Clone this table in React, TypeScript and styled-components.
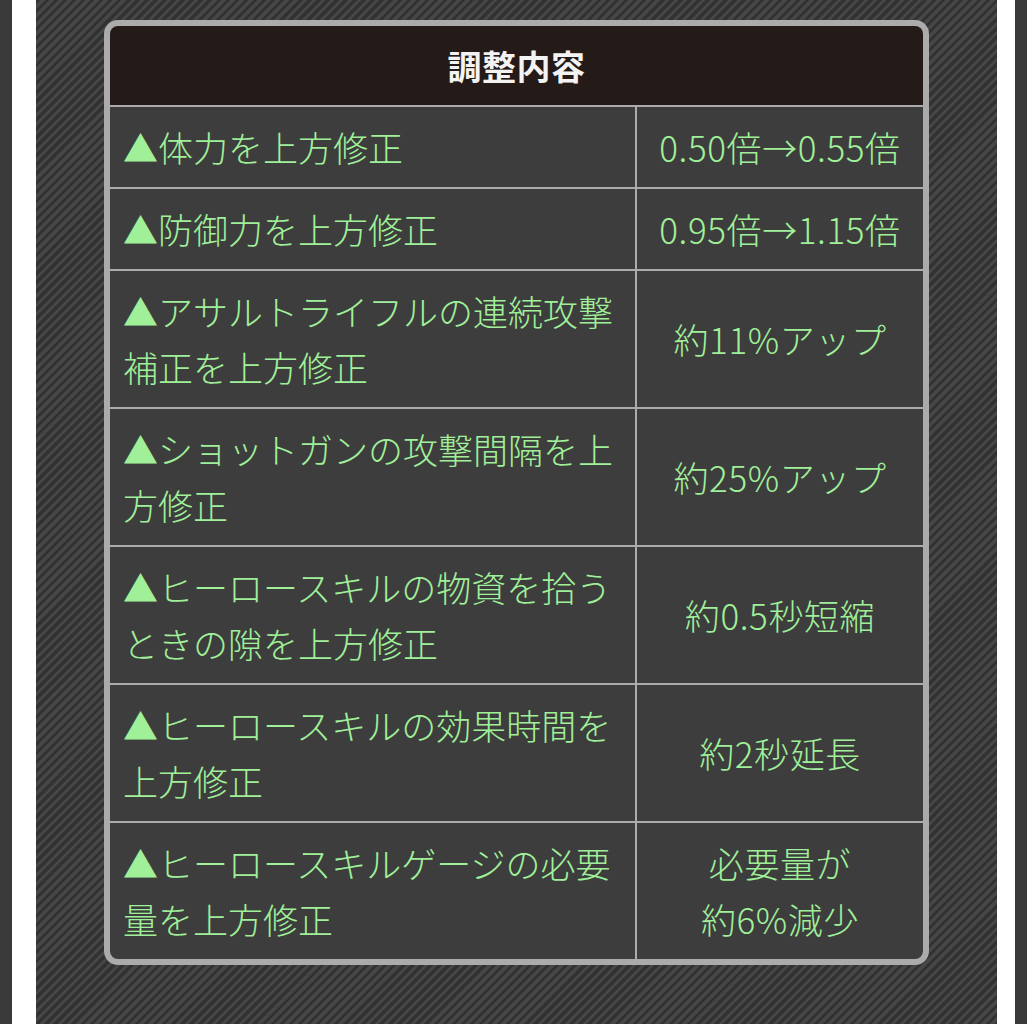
import React from "react";
import styled, { createGlobalStyle } from "styled-components";

const GlobalStyle = createGlobalStyle`
  html, body {
    margin: 0;
    padding: 0;
    background: #3a3a3a;
  }
  body {
    font-family: "Noto Sans CJK JP", "Noto Sans", sans-serif;
  }
`;

const Page = styled.div`
  display: flex;
  min-height: 100vh;
  padding: 0 12px;
  background: #3a3a3a;
  box-sizing: border-box;
`;

const Sheet = styled.div`
  flex: 1;
  display: flex;
  padding: 0 18px 0 24px;
  background: #ffffff;
`;

const Striped = styled.main`
  flex: 1;
  padding: 20px 68px 60px;
  background: repeating-linear-gradient(
    135deg,
    #323232 0px,
    #323232 3.2px,
    #464646 3.2px,
    #464646 6.4px
  );
`;

const Table = styled.div`
  display: grid;
  grid-template-columns: 525px 1fr;
  gap: 2px;
  background: #ababab;
  border: 6px solid #ababab;
  border-radius: 14px;
  overflow: hidden;
`;

const Header = styled.div`
  grid-column: 1 / -1;
  height: 79px;
  display: flex;
  align-items: center;
  justify-content: center;
  background: #241a17;
  color: #f3f3f3;
  font-size: 34px;
  font-weight: 700;
  letter-spacing: 0.5px;
`;

const Cell = styled.div<{ $align: "left" | "center" }>`
  display: flex;
  align-items: center;
  justify-content: ${(p) => (p.$align === "center" ? "center" : "flex-start")};
  text-align: ${(p) => p.$align};
  padding: 12px 13px;
  min-height: 56px;
  background: #3d3d3d;
  color: #a0f09a;
  font-size: 35px;
  font-weight: 300;
  line-height: 56px;
  letter-spacing: ${(p) => (p.$align === "center" ? "0.6px" : "0")};
`;

const CellText = styled.span`
  display: block;
`;

type Row = { item: string; value: React.ReactNode };

const rows: Row[] = [
  { item: "▲体力を上方修正", value: "0.50倍→0.55倍" },
  { item: "▲防御力を上方修正", value: "0.95倍→1.15倍" },
  { item: "▲アサルトライフルの連続攻撃補正を上方修正", value: "約11%アップ" },
  { item: "▲ショットガンの攻撃間隔を上方修正", value: "約25%アップ" },
  { item: "▲ヒーロースキルの物資を拾うときの隙を上方修正", value: "約0.5秒短縮" },
  { item: "▲ヒーロースキルの効果時間を上方修正", value: "約2秒延長" },
  {
    item: "▲ヒーロースキルゲージの必要量を上方修正",
    value: (
      <>
        必要量が
        <br />
        約6%減少
      </>
    ),
  },
];

export default function App() {
  return (
    <>
      <GlobalStyle />
      <Page>
        <Sheet>
          <Striped>
            <Table>
              <Header>調整内容</Header>
              {rows.map((r, i) => (
                <React.Fragment key={i}>
                  <Cell $align="left">
                    <CellText>{r.item}</CellText>
                  </Cell>
                  <Cell $align="center">
                    <CellText>{r.value}</CellText>
                  </Cell>
                </React.Fragment>
              ))}
            </Table>
          </Striped>
        </Sheet>
      </Page>
    </>
  );
}
